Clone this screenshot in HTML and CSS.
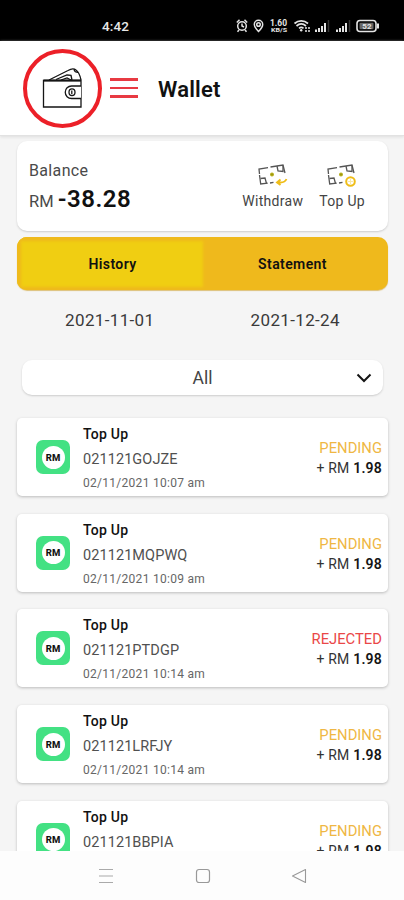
FILE: index.html
```
<!DOCTYPE html>
<html lang="en">
<head>
<meta charset="utf-8">
<title>Wallet</title>
<link rel="stylesheet" href="styles.css">
</head>
<body>
<svg width="0" height="0" class="defs">
  <defs>
    <g id="note" fill="none" stroke="#555" stroke-width="1.300">
      <path d="M1.500 10L1 5l9-1.400M12.500 3l12.500-2 2 8M1.500 11l1.200 9 7-.8M12 19l3.500-.6"/>
      <path d="M19 2l1 5 5 .5 0-6M2.500 14.500l4.500-.5 1.500 5.500"/>
      <circle cx="14" cy="10.500" r="1.300" fill="#8c8c10" stroke="#b3aa14"/>
    </g>
  </defs>
</svg>
<div class="phone">
  <div class="status">
    <span class="clock">4:42</span>
    <svg class="sysicons" width="148" height="16" viewBox="0 0 148 16" fill="none" stroke="#e4e4e4" stroke-width="1.500">
      <circle cx="6" cy="8" r="4.300"/><path d="M6 5.500V8l2 1M.8 4.500l2.700-2.700M11.200 4.500L8.500 1.800M3 12l-1.500 1.800M9 12l1.500 1.800"/>
      <path d="M22.500 13.500C19 10 18.300 8.500 18.300 6.500a4.200 4.200 0 0 1 8.400 0c0 2-.7 3.500-4.200 7z"/><circle cx="22.500" cy="6.500" r="1.800"/>
      <text x="34" y="8" class="rate" textLength="17" lengthAdjust="spacingAndGlyphs">1.60</text>
      <text x="35" y="14.300" class="unit" textLength="16" lengthAdjust="spacingAndGlyphs">KB/S</text>
      <path d="M58.500 5.500c4-3.600 9.500-3.600 13.500 0M60.500 8c3-2.600 6.500-2.600 9.500 0M63 10.300c1.500-1.200 3-1.200 4.500 0" stroke-width="1.700"/>
      <circle cx="65.200" cy="12.300" r="1.200" fill="#e4e4e4" stroke="none"/><path d="M70 9v5M73 9v5" stroke-dasharray="2 1"/>
      <path d="M80 14v-2.500M83 14v-4M86 14V8M89 14V5" stroke-width="2"/><path d="M92.500 14V2" stroke="#333"/>
      <path d="M101 14v-2.500M104 14v-4M107 14V8M110 14V5" stroke-width="2"/><path d="M113.500 14V2" stroke="#333"/>
      <rect x="121" y="2.500" width="19" height="11" rx="3" stroke-width="1.600"/><path d="M142 5.500v5" stroke-width="2"/>
      <rect x="123.500" y="4.800" width="14" height="6.500" rx="1" fill="#666" stroke="none"/>
      <text x="126.300" y="11" class="charge">52</text>
    </svg>
  </div>
  <header class="header">
    <div class="ring">
      <svg width="42" height="42" viewBox="0 0 42 42" fill="none" stroke="#151515" stroke-width="1.300">
        <path d="M1.500 13.500h37.500v26.500h-37.500z"/><path d="M1.500 13.500H39" stroke-width="1.800"/>
        <path d="M7 13L26 3.500q5-3 8-.5 3.500 2.500 5 10M14 12.500l11-4.500 4.500.3M19 13l6-2 4 2M29 8.500l1 4.500M32 2.500q.5 3 4.500 3"/>
        <path d="M39 19H29.500a6.200 6.200 0 0 0 0 12.500H39" fill="#fff"/>
        <ellipse cx="30" cy="25.200" rx="3" ry="3.300"/><path d="M29.800 23.500v3.500"/>
      </svg>
    </div>
    <div class="burger"><i></i><i></i><i></i></div>
    <h1>Wallet</h1>
  </header>
  <main>
    <section class="balance">
      <div class="amount">
        <div class="label">Balance</div>
        <div class="sum"><span>RM</span> <b>-38.28</b></div>
      </div>
      <div class="action withdraw">
        <svg width="30" height="24" viewBox="0 0 30 24"><use href="#note"/><path d="M28.500 15q-1.500 3.500-6 3.500h-3M22.500 15.500l-3.500 3 3.500 2.500" fill="none" stroke="#efbd18" stroke-width="1.900"/></svg>
        <span>Withdraw</span>
      </div>
      <div class="action topup">
        <svg width="30" height="24" viewBox="0 0 30 24"><use href="#note"/><circle cx="23.500" cy="17.500" r="4.300" fill="#fff" stroke="#efbd18" stroke-width="2"/><path d="M21 17.500h5M23.500 15v5" stroke="#f9e9a8"/></svg>
        <span>Top Up</span>
      </div>
    </section>
    <nav class="tabs"><span class="tab active">History</span><span class="tab">Statement</span></nav>
    <div class="dates"><span>2021-11-01</span><span>2021-12-24</span></div>
    <div class="select"><span>All</span>
      <svg width="16" height="10" viewBox="0 0 16 10" fill="none" stroke="#151515" stroke-width="2"><path d="M1.500 1.500L8 8l6.500-6.500"/></svg>
    </div>
    <div class="list">
      <article class="row"><div class="badge"><span>RM</span></div><div class="info"><b>Top Up</b><span class="ref">021121GOJZE</span><small>02/11/2021 10:07 am</small></div><div class="value"><span class="state">PENDING</span><span class="money">+ RM <b>1.98</b></span></div></article>
      <article class="row"><div class="badge"><span>RM</span></div><div class="info"><b>Top Up</b><span class="ref">021121MQPWQ</span><small>02/11/2021 10:09 am</small></div><div class="value"><span class="state">PENDING</span><span class="money">+ RM <b>1.98</b></span></div></article>
      <article class="row"><div class="badge"><span>RM</span></div><div class="info"><b>Top Up</b><span class="ref">021121PTDGP</span><small>02/11/2021 10:14 am</small></div><div class="value"><span class="state rejected">REJECTED</span><span class="money">+ RM <b>1.98</b></span></div></article>
      <article class="row"><div class="badge"><span>RM</span></div><div class="info"><b>Top Up</b><span class="ref">021121LRFJY</span><small>02/11/2021 10:14 am</small></div><div class="value"><span class="state">PENDING</span><span class="money">+ RM <b>1.98</b></span></div></article>
      <article class="row"><div class="badge"><span>RM</span></div><div class="info"><b>Top Up</b><span class="ref">021121BBPIA</span></div><div class="value"><span class="state">PENDING</span><span class="money">+ RM <b>1.98</b></span></div></article>
    </div>
  </main>
  <footer class="sysnav">
    <svg width="16" height="16" viewBox="0 0 16 16" fill="none" stroke="#aaa" stroke-width="1.200"><path d="M1 1.500h14M1 8h14M1 14.500h14"/></svg>
    <svg width="16" height="16" viewBox="0 0 16 16" fill="none" stroke="#999" stroke-width="1.200"><rect x="1.500" y="1.500" width="13" height="13" rx="2.500"/></svg>
    <svg width="16" height="16" viewBox="0 0 16 16" fill="none" stroke="#999" stroke-width="1.100" stroke-linejoin="round"><path d="M14.500 1.500v13L1.500 8z"/></svg>
  </footer>
</div>
</body>
</html>
```
FILE: styles.css
```
* { box-sizing: border-box; }
body { margin: 0; font-family: Roboto, "Liberation Sans", sans-serif; color: #111; }
.defs { display: block; }
.phone { width: 404px; height: 900px; display: flex; flex-direction: column; overflow: hidden; background: #f5f5f5; }
.status { flex: none; height: 41px; background: #000; display: flex; padding: 18px 20px 0 102px; justify-content: space-between; }
.clock { color: #e8e8e8; font-size: 13.500px; line-height: 17px; font-weight: 500; letter-spacing: .1px; }
.sysicons { margin-left: auto; }
.sysicons text { fill: #e4e4e4; stroke: none; font-weight: 700; }
.sysicons .rate { font-size: 9px; }
.sysicons .unit { font-size: 6px; }
.sysicons .charge { font-size: 8px; }
.header { flex: none; height: 95px; background: #fff; border-bottom: 1px solid #e2e2e2; box-shadow: 0 1px 3px #ddd; display: flex; align-items: flex-start; padding: 8px 0 0 23px; }
.ring { width: 79px; height: 79px; border: 4px solid #ec2028; border-radius: 50%; display: flex; padding: 14px 0 0 15px; }
.burger { margin: 29px 0 0 8px; width: 28px; display: grid; gap: 6px; }
.burger i { height: 2.5px; background: #e83a42; }
h1 { margin: 27px 0 0 20px; font-size: 22px; line-height: 28px; font-weight: 600; letter-spacing: .2px; }
main { flex: 1; min-height: 0; overflow: hidden; padding: 5px 16px 0 17px; }
.balance { height: 90px; background: #fff; border-radius: 10px; box-shadow: 0 1px 2px #ccc; display: flex; padding: 19px 23px 0 12px; }
.amount { flex: 1; }
.label { font-size: 16px; line-height: 22px; letter-spacing: .35px; color: #4a4a4a; }
.sum { font-size: 16.500px; line-height: 34px; white-space: nowrap; color: #4a4a4a; }
.sum b { font-size: 24px; font-weight: 600; color: #111; letter-spacing: .5px; }
.action { display: flex; flex-direction: column; align-items: center; font-size: 14px; line-height: 20px; letter-spacing: .3px; color: #444; padding-top: 4px; }
.action svg { margin-bottom: 3px; }
.topup { margin-left: 16px; }
.tabs { margin-top: 6px; height: 53px; border-radius: 10px; background: #efb91c; display: grid; grid-template-columns: 190px 1fr; box-shadow: 0 1px 1px #ddc078; overflow: hidden; }
.tab { font-size: 14px; font-weight: 600; line-height: 54px; text-align: center; letter-spacing: .4px; padding-right: 10px; }
.active { background: #f0ce12; box-shadow: inset 0 0 3px 4px #efb91c; padding: 0 0 0 1px; }
.dates { display: grid; grid-template-columns: 1fr 1fr; text-align: center; font-size: 17px; line-height: 24px; margin-top: 18px; letter-spacing: .35px; color: #3a3a3a; }
.select { height: 35px; margin: 28px 5px 0; background: #fff; border-radius: 10px; box-shadow: 0 1px 2px #ccc; display: grid; grid-template-columns: 1fr auto 1fr; align-items: center; padding-right: 11px; font-size: 17.500px; color: #444; }
.select span { grid-column: 2; padding-left: 11px; }
.select svg { justify-self: end; }
.list { margin-top: 23px; display: grid; gap: 17.7px; }
.row { height: 78px; background: #fff; border-radius: 5px; box-shadow: 0 1px 3px #bbb; display: flex; padding: 0 6px 0 19px; }
.badge { margin-top: 22px; width: 34px; height: 34px; border-radius: 7px; background: #43e183; display: flex; align-items: center; justify-content: center; }
.badge span { width: 23px; height: 23px; background: #fff; border-radius: 50%; font-size: 9.500px; line-height: 23px; font-weight: 800; text-align: center; }
.info { margin-left: 13px; padding-top: 5px; flex: 1; display: flex; flex-direction: column; white-space: nowrap; }
.info b { font-size: 14px; line-height: 22px; font-weight: 500; letter-spacing: .25px; }
.ref { font-size: 14.500px; line-height: 29px; color: #505050; letter-spacing: .08px; }
.info small { font-size: 12px; line-height: 18px; color: #666; letter-spacing: .28px; }
.value { padding-top: 20px; display: flex; flex-direction: column; align-items: flex-end; line-height: 20px; }
.state { font-size: 14.800px; color: #efb744; }
.rejected { color: #ea4747; }
.money { font-size: 14px; color: #333; letter-spacing: .2px; }
.money b { font-weight: 600; color: #151515; }
.sysnav { flex: none; height: 49px; background: #fdfdfd; display: flex; gap: 80.500px; padding: 17px 0 0 98px; }
```
